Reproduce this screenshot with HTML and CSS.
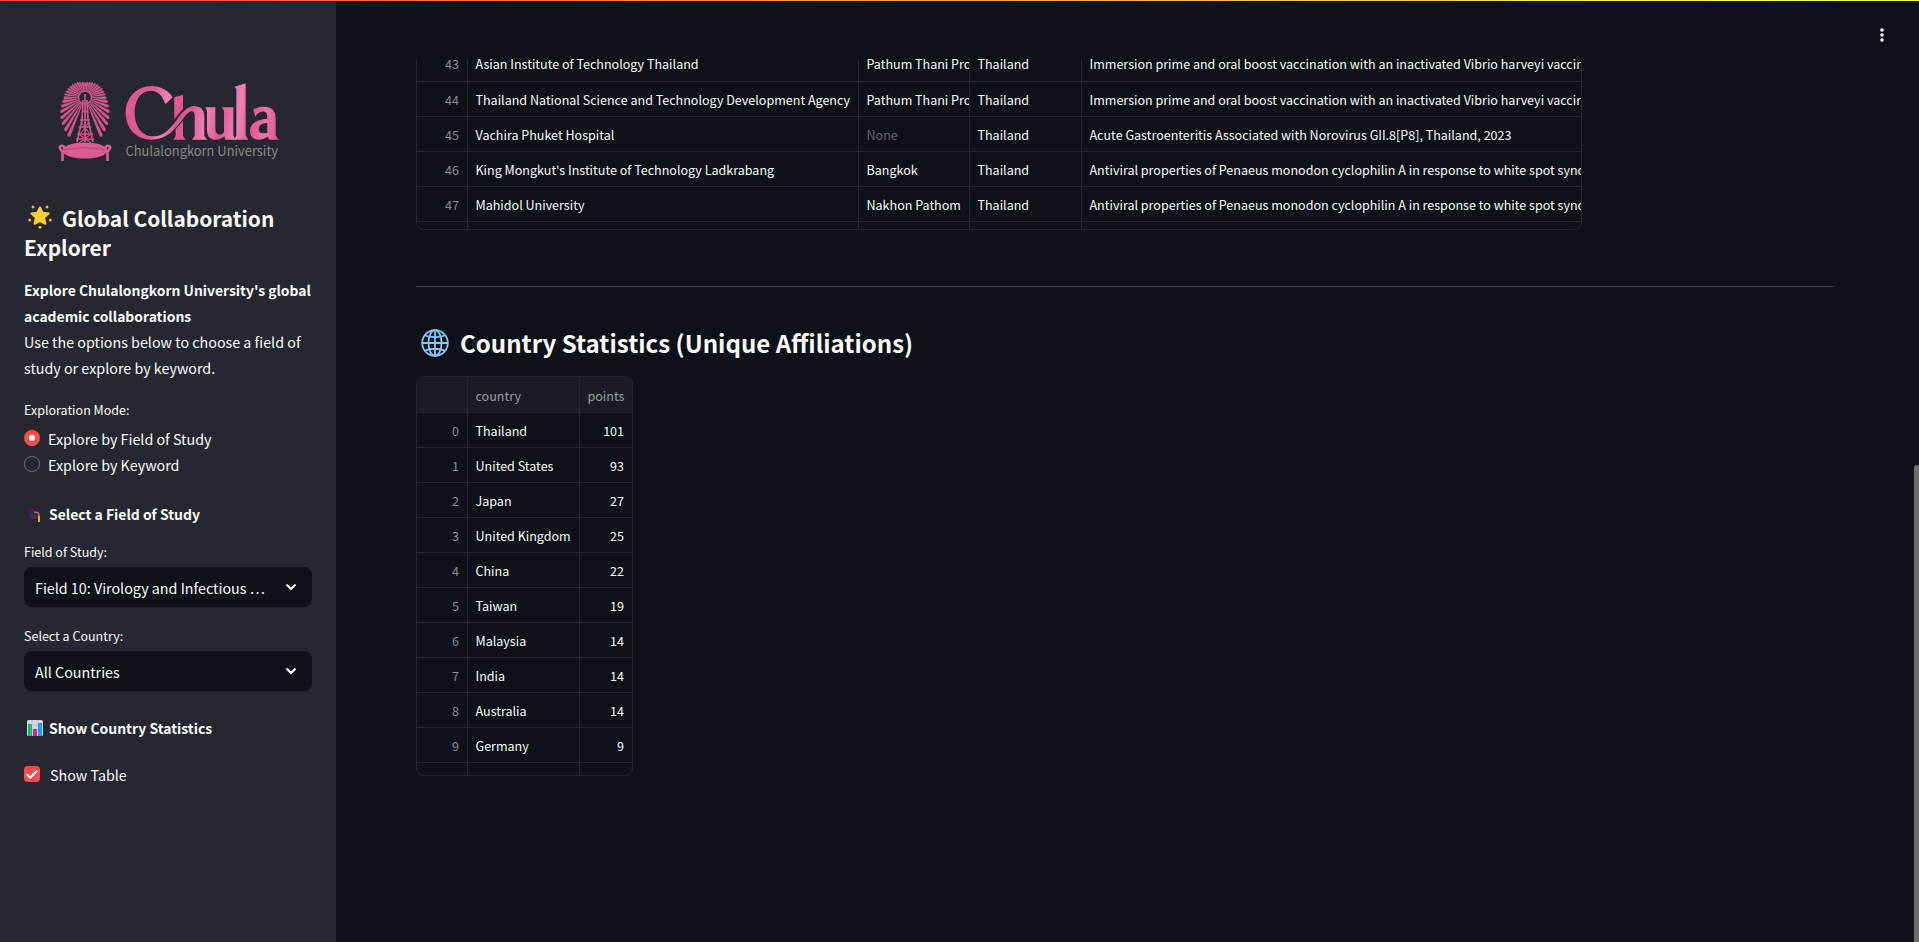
FILE: index.html
```html
<!DOCTYPE html>
<html lang="en">
<head>
<meta charset="utf-8">
<title>Global Collaboration Explorer</title>
<link rel="stylesheet" href="styles.css">
</head>
<body>
<div class="rainbow"></div>
<div class="app">
  <aside class="sidebar">
    <svg class="logo" width="240" height="94" viewBox="0 0 240 94">
      <defs>
        <linearGradient id="pink" gradientUnits="userSpaceOnUse" x1="257" y1="100" x2="716" y2="160">
          <stop offset="0" stop-color="#e0588f"/><stop offset=".16" stop-color="#e0588f"/><stop offset=".27" stop-color="#ee82b8"/><stop offset=".33" stop-color="#e0588f"/><stop offset=".42" stop-color="#e0588f"/><stop offset=".53" stop-color="#ee82b8"/><stop offset=".62" stop-color="#e0588f"/><stop offset=".74" stop-color="#ee82b8"/><stop offset=".82" stop-color="#e0588f"/><stop offset=".92" stop-color="#ea74aa"/><stop offset="1" stop-color="#e0588f"/>
        </linearGradient>
      </defs>
      <g id="emblem" fill="#cf5488"></g>
      <g fill="none" stroke="#cf5488">
        <circle cx="61" cy="21.500" r="6.500" stroke-width="1.500"/>
        <path d="M61 18V66M57.500 37Q61 33 64.500 37M56 44H66M54.500 51H67.500M53 58H69M52 63H70M59 24L58 44L53 66M63 24L64 44L69 66" stroke-width="1.700"/>
        <path d="M57 46L65 57M65 46L57 57M55 58L67 67M67 58L55 67" stroke-width="1.200"/>
        <path d="M38.500 85V76Q34 71 37 70Q40 69 41 73M83.500 85V76Q88 71 85 70Q82 69 81 73" stroke="#dc5c92" stroke-width="2.600"/>
      </g>
      <ellipse cx="61" cy="74.500" rx="22.500" ry="8" fill="#dc5c92"/>
      <path d="M40 74Q61 69.500 82 74" stroke="#a94a76" fill="none"/>
      <text class="logo-sub" x="101.500" y="79.500" textLength="152.500" lengthAdjust="spacingAndGlyphs">Chulalongkorn University</text>
      <g fill="url(#pink)" fill-rule="evenodd" transform="translate(16 -6) scale(.33333)">
        <path d="M398 82C385 60 360 48 335 48C290 48 257 84 257 128C257 175 290 209 335 209C385 209 410 170 428 148C438 134 448 122 456 124C464 126 464 134 464 145V198L456 209H502L493 198V140C493 118 480 108 462 108C440 110 425 130 415 143C395 170 375 199 340 199C305 199 284 168 284 128C284 90 302 62 332 62C355 62 368 78 376 103Z"/>
        <path d="M403 82L429 74V116L403 148ZM407 178L429 153V198L437 209H400L407 198Z"/>
        <path d="M496 112H526V175Q526 194 540 194Q550 193 552 186V122L545 112H580V196L586 209H556L553 199Q540 210 522 209Q501 207 501 180V122Z"/>
        <path d="M583 50L617 40V196L625 209H580L589 198V58Z"/>
        <path d="M640 118Q660 108 680 111Q707 114 707 145V196L716 209H688L683 200Q665 213 648 208Q630 202 630 182Q632 150 682 146V138Q680 122 664 125Q652 128 646 140ZM682 158Q656 160 656 178Q657 195 682 188Z"/>
      </g>
    </svg>
    <h2 class="title"><svg class="star" width="24" height="24" viewBox="0 0 24 24"><path d="M12 2.500l2.600 5.300 6 .8-4.500 4 1.300 6.200L12 16l-5.400 2.800 1.300-6.200-4.500-4 6-.8z" fill="#ffce31" stroke="#ffce31" stroke-width="2" stroke-linejoin="round"/><g fill="#eab83b"><circle cx="5" cy="2" r="1.500"/><circle cx="19" cy="2" r="1.500"/><circle cx="1.700" cy="15" r="1.500"/><circle cx="22.300" cy="15" r="1.500"/><circle cx="12" cy="22.300" r="1.500"/></g></svg>Global Collaboration<br>Explorer</h2>
    <p class="intro"><b>Explore Chulalongkorn University's global<br>academic collaborations</b>Use the options below to choose a field of<br>study or explore by keyword.</p>
    <div class="label mode">Exploration Mode:</div>
    <div class="radio"><span class="dot on"></span>Explore by Field of Study</div>
    <div class="radio"><span class="dot"></span>Explore by Keyword</div>
    <div class="sub study"><svg width="18" height="18" viewBox="0 0 18 18"><path d="M2 6.500L7 3L15 6L12 11Z" fill="#3b1f4f"/><path d="M3.500 8.500V12Q7 14.500 11.500 13.500V9.500L9 10Z" fill="#4a2b5c"/><path d="M8 7Q13 7 13 10V14" stroke="#e89a2c" stroke-width="1.200" fill="none"/><path d="M12 11h2v6h-2z" fill="#f5a52f"/></svg>Select a Field of Study</div>
    <div class="label">Field of Study:</div>
    <div class="select"><span>Field 10: Virology and Infectious …</span><svg width="12" height="8" viewBox="0 0 12 8"><path d="M1.500 1.500L6 6l4.500-4.500"/></svg></div>
    <div class="label country">Select a Country:</div>
    <div class="select"><span>All Countries</span><svg width="12" height="8" viewBox="0 0 12 8"><path d="M1.500 1.500L6 6l4.500-4.500"/></svg></div>
    <div class="sub stats"><svg width="18" height="18" viewBox="0 0 18 18"><rect x="1" y="1" width="16" height="16" rx="1.500" fill="#dcd3e3"/><path d="M1 6h16M1 11h16M6 1v16M12 1v16" stroke="#bdb2c8" stroke-width=".6"/><path d="M2 5h4v12H2z" fill="#00c96d"/><path d="M7 10h4v7H7z" fill="#f4148b"/><path d="M12 4h4v13h-4z" fill="#0da5ee"/></svg>Show Country Statistics</div>
    <div class="check"><svg width="16" height="16" viewBox="0 0 16 16"><rect width="16" height="16" rx="4" fill="#ff4b4b"/><path d="M2.800 8.200L6.400 11.700L13.200 4.800" stroke="#fff" stroke-width="2.200" fill="none"/></svg>Show Table</div>
  </aside>
  <main class="main">
    <div class="grid wide" id="pubs"></div>
    <hr class="rule">
    <h2 class="heading"><svg width="28" height="28" viewBox="0 0 28 28" fill="none" stroke="#82c8fa" stroke-width="1.800"><circle cx="14" cy="14" r="12.800"/><ellipse cx="14" cy="14" rx="6.500" ry="12.800"/><path d="M14 1v26M1 14h26M4 6.500q10 3.500 20 0M4 21.500q10-3.500 20 0"/></svg>Country Statistics (Unique Affiliations)</h2>
    <div class="grid small" id="countries"></div>
    <svg class="menu" width="4" height="14" viewBox="0 0 4 14" fill="#fafafa"><circle cx="2" cy="2" r="1.800"/><circle cx="2" cy="7" r="1.800"/><circle cx="2" cy="12" r="1.800"/></svg>
    <div class="scroll"></div>
  </main>
</div>
<script src="app.js"></script>
</body>
</html>
```
FILE: styles.css
```css
* { box-sizing: border-box; }
body {
  margin: 0;
  height: 942px;
  overflow: hidden;
  background: #0e1117;
  color: #fafafa;
  font-family: "Noto Sans CJK SC", "Noto Sans", sans-serif;
  font-size: 14.3px;
}
.rainbow {
  position: absolute;
  z-index: 2;
  width: 100%;
  height: 1px;
  background: linear-gradient(90deg, #ff4b4b, #fffd80);
}
.app { display: flex; height: 942px; }
.sidebar {
  flex: none;
  width: 336px;
  padding: 76px 24px 0;
  background: #262730;
  white-space: nowrap;
}
.logo { display: block; overflow: visible; }
.logo-sub { fill: #8b8886; font-size: 13.5px; }
.title {
  margin: 34px 0 0;
  height: 58px;
  font-size: 20.9px;
  line-height: 28.8px;
  font-weight: 600;
}
.star { margin: 0 10px 0 4px; vertical-align: -2px; }
.intro { margin: 16px 0 0; height: 103px; line-height: 25.6px; }
.intro b { display: block; font-size: 13.92px; }
.label { font-size: 12.5px; line-height: 19px; height: 25px; }
.mode { margin-top: 19px; }
.radio { display: flex; align-items: center; gap: 8px; height: 26px; }
.dot {
  width: 16px;
  height: 16px;
  border: 1px solid #6b6c74;
  border-radius: 50%;
}
.dot.on { border: 5px solid #ff4b4b; background: #fafafa; }
.sub {
  display: flex;
  align-items: center;
  gap: 5px;
  height: 26px;
  padding-left: 2px;
  font-size: 13.95px;
  font-weight: 600;
}
.study { margin: 24px 0 15px; }
.select {
  display: flex;
  align-items: center;
  justify-content: space-between;
  height: 40px;
  padding: 0 15px 0 11px;
  border-radius: 8px;
  background: #0e1117;
}
.select path { fill: none; stroke: #fafafa; stroke-width: 2.2; }
.country { margin-top: 19px; }
.stats { margin: 24px 0 20px; }
.check { display: flex; align-items: center; gap: 10px; height: 26px; }
.main { position: relative; flex: 1; padding: 59px 85px 0 80px; }
.grid {
  display: grid;
  overflow: hidden;
  border: 1px solid #25272c;
  font-size: 12.54px;
}
.wide {
  width: 1166px;
  height: 171px;
  grid-template-columns: 51px 391px 111px 112px 1fr;
  grid-template-rows: 23px repeat(4, 35px) 8px;
  border-top: 0;
  border-radius: 0 0 8px 8px;
}
.small {
  width: 217px;
  height: 400px;
  grid-template-columns: 51px 112px 1fr;
  grid-template-rows: 36px repeat(10, 35px) 13px;
  border-radius: 8px;
}
.cell {
  overflow: hidden;
  padding: 0 8px 0 7.500px;
  border-right: 1px solid #25272c;
  border-bottom: 1px solid #25272c;
  line-height: 35px;
  white-space: nowrap;
}
.cell.cut { display: flex; align-items: flex-end; }
.cell.edge { border-right: 0; }
.cell.last { border-bottom: 0; }
.cell.num { text-align: right; justify-content: flex-end; }
.cell.dim { color: #8b8c91; }
.cell.none { color: #65676c; }
.cell.head { background: #1a1c23; color: #9b9ca1; line-height: 37px; }
.rule { height: 1px; margin: 56px 0 0; border: 0; background: #3c3e43; }
.heading {
  display: flex;
  align-items: center;
  margin: 36px 0 14px;
  height: 39px;
  padding-left: 5px;
  gap: 11px;
  font-size: 24.05px;
  line-height: 39px;
  font-weight: 600;
}
.menu { position: absolute; right: 35px; top: 28px; }
.scroll {
  position: absolute;
  right: 0;
  top: 465px;
  width: 5px;
  height: 477px;
  border-top-left-radius: 3px;
  background: #6b6c70;
}
```
FILE: app.js
```js
const prime = "Immersion prime and oral boost vaccination with an inactivated Vibrio harveyi vaccine";
const antiviral = "Antiviral properties of Penaeus monodon cyclophilin A in response to white spot syndrome";
const pubs = [
  ["43", "Asian Institute of Technology Thailand", "Pathum Thani Province", "Thailand", prime],
  ["44", "Thailand National Science and Technology Development Agency", "Pathum Thani Province", "Thailand", prime],
  ["45", "Vachira Phuket Hospital", "None", "Thailand", "Acute Gastroenteritis Associated with Norovirus GII.8[P8], Thailand, 2023"],
  ["46", "King Mongkut's Institute of Technology Ladkrabang", "Bangkok", "Thailand", antiviral],
  ["47", "Mahidol University", "Nakhon Pathom", "Thailand", antiviral],
  ["", "", "", "", ""]
];
const countries = [
  ["", "country", "points"], ["0", "Thailand", "101"], ["1", "United States", "93"],
  ["2", "Japan", "27"], ["3", "United Kingdom", "25"], ["4", "China", "22"],
  ["5", "Taiwan", "19"], ["6", "Malaysia", "14"], ["7", "India", "14"],
  ["8", "Australia", "14"], ["9", "Germany", "9"], ["", "", ""]
];
function fill(id, rows, small) {
  const grid = document.getElementById(id);
  rows.forEach((row, r) => row.forEach((text, c) => {
    const cell = document.createElement("div");
    let cls = "cell";
    if (c === 0) cls += " num dim";
    if (small && c === 2) cls += " num";
    if (small && r === 0) cls += " head";
    if (!small && r === 0) cls += " cut";
    if (c === row.length - 1) cls += " edge";
    if (r === rows.length - 1) cls += " last";
    if (text === "None") cls += " none";
    cell.className = cls;
    cell.textContent = text;
    grid.appendChild(cell);
  }));
}
fill("pubs", pubs, false);
fill("countries", countries, true);

// Tapered rays fan out around the crown and lengthen toward the base.
const emblem = document.getElementById("emblem");
const half = [0, 9, 18, 27, 36, 45, 54, 63, 72, 81, 91, 101, 111, 121, 131, 140, 149, 157];
const angles = half.concat(half.slice(1).map(a => -a));
for (const a of angles) {
  const m = Math.abs(a);
  const len = m < 90 ? 15.5 + m * 0.07 : 21.8 + Math.pow((m - 90) / 67, 1.4) * 21;
  const w = m < 90 ? 1.15 : 1.7;
  const ray = document.createElementNS("http://www.w3.org/2000/svg", "path");
  ray.setAttribute("d", `M-.4 -7L${-w} ${-len + 1.5}L0 ${-len}L${w} ${-len + 1.5}L.4 -7Z`);
  ray.setAttribute("transform", `translate(61 21.5) rotate(${a})`);
  emblem.appendChild(ray);
}
```
